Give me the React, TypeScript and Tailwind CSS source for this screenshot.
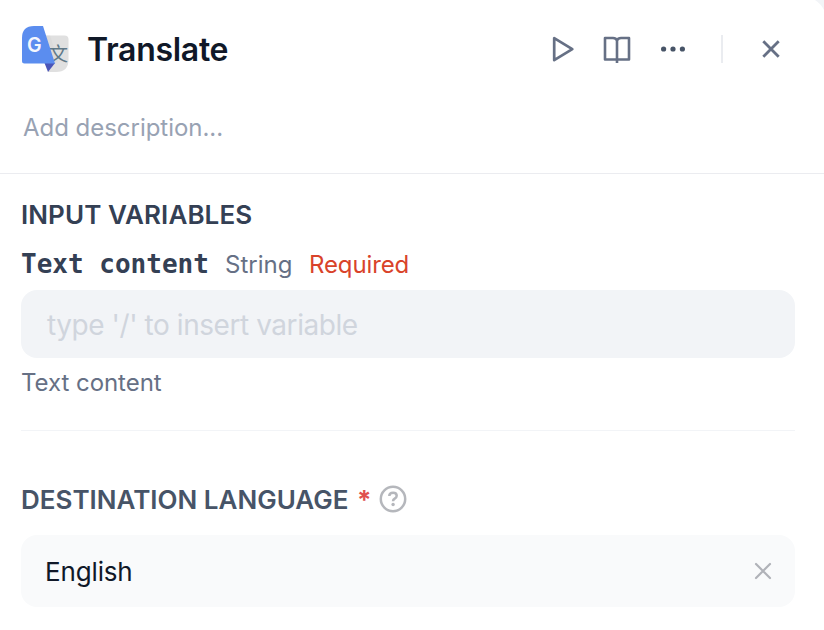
import React from 'react';

function TranslateLogo() {
  return (
    <svg width="48" height="48" viewBox="0 0 48 48" className="shrink-0">
      <path d="M24 10.500h19.500a4 4 0 0 1 4 4v20q0 12.500-12.500 12.500H27z" fill="#e0e0e0" />
      <path d="M24 10.500h5l8 25-10 11z" fill="#d0d0d0" opacity="0.35" />
      <text x="27.500" y="35.500" fontSize="19.500" fill="#607988" fontWeight="400" fontFamily="'Noto Sans CJK SC', sans-serif">文</text>
      <path d="M23.500 38h10.500L27 47z" fill="#4a55b8" />
      <path d="M13 1H22L34 38.500H3.500a2.500 2.500 0 0 1-2.500-2.500V13Q1 1 13 1z" fill="#5b8def" />
      <text x="6" y="26.800" fontSize="19.500" fill="#f4f7fd" fontWeight="600" fontFamily="Inter, sans-serif">G</text>
    </svg>
  );
}

function Header() {
  return (
    <header className="flex h-[174px] flex-col border-b border-[#ebecf0] pl-[21px]">
      <div className="mt-[25px] flex h-12 items-center">
        <TranslateLogo />
        <h1 className="ml-[18px] w-[465px] pt-[2px] text-[32px] leading-[48px] font-semibold tracking-[-0.3px] text-[#101828]">Translate</h1>
        <svg width="24" height="28" viewBox="0 0 24 28" fill="none" stroke="#667085" strokeWidth="2.700" strokeLinejoin="round">
          <path d="M2.200 3.200v22L20.300 14.200z" />
        </svg>
        <svg className="ml-[27px]" width="28" height="30" viewBox="0 0 28 30" fill="none" stroke="#667085" strokeWidth="2.600" strokeLinejoin="round">
          <path d="M14 6.500q-1-2.500-4-2.500H2v21.500h24V4h-8q-3 0-4 2.500zM14 6.500v22.500" />
        </svg>
        <svg className="ml-[30px]" width="26" height="8" viewBox="0 0 26 8" fill="#475467">
          <circle cx="2.600" cy="4" r="2.600" />
          <circle cx="12" cy="4" r="2.600" />
          <circle cx="21.400" cy="4" r="2.600" />
        </svg>
        <div className="ml-[34px] h-7 w-[2px] bg-[#eaecf0]" />
        <svg className="ml-[38px]" width="20" height="20" viewBox="0 0 20 20" fill="none" stroke="#667085" strokeWidth="2.800">
          <path d="M2.300 2.300l15.400 15.400M17.700 2.300L2.300 17.700" />
        </svg>
      </div>
      <p className="mt-[37px] pl-[2px] text-[24px] leading-9 tracking-[-0.03px] text-[#98a2b3]">Add description...</p>
    </header>
  );
}

export default function App() {
  return (
    <div className="relative h-[630px] w-[824px] overflow-hidden bg-white font-['Inter',sans-serif]">
      <svg className="absolute top-0 right-0" width="9" height="10" viewBox="0 0 9 10">
        <path d="M0 0q6 4 9 10V0z" fill="#f2f4f7" />
      </svg>
      <Header />
      <main className="flex flex-col px-[21px] pr-[29px]">
        <h2 className="mt-[23px] text-[26px] leading-9 font-semibold tracking-[0.08px] text-[#344054]">INPUT VARIABLES</h2>
        <div className="mt-[13px] flex h-9 items-baseline text-[24px] leading-9">
          <span className="w-[204px] font-['DejaVu_Sans_Mono',monospace] text-[26px] font-bold text-[#344054]">Text content</span>
          <span className="w-[84px] text-[#667085]">String</span>
          <span className="tracking-[-0.12px] text-[#d9432a]">Required</span>
        </div>
        <div className="mt-[8px] flex h-[68px] items-center rounded-[16px] bg-[#f2f4f7] pt-[2px] pl-[26px] text-[28px] tracking-[-0.44px] text-[#d0d5dd]">type '/' to insert variable</div>
        <p className="mt-[7px] text-[24px] leading-9 tracking-[-0.05px] text-[#667085]">Text content</p>
        <div className="mt-[29px] h-px bg-[#f2f4f7]" />
        <div className="mt-[51px] flex h-9 items-center">
          <h2 className="w-[336px] text-[26px] leading-9 font-semibold whitespace-nowrap text-[#475467]">DESTINATION LANGUAGE</h2>
          <span className="w-[22px] text-[26px] leading-9 font-bold text-[#e0504e]">*</span>
          <svg className="-mt-[2px]" width="28" height="28" viewBox="0 0 28 28" fill="none" stroke="#b5b7bc" strokeWidth="2.500">
            <circle cx="14" cy="14" r="12.200" />
            <path d="M10.300 11q0-3.300 3.800-3.300 3.600 0 3.600 3 0 1.700-2 2.900-1.700 1-1.700 2.700" />
            <circle cx="14.100" cy="19.500" r="1.700" fill="#b5b7bc" stroke="none" />
          </svg>
        </div>
        <div className="mt-[17px] flex h-[72px] items-center justify-between rounded-[16px] bg-[#f9fafb] pr-[23px] pl-6 text-[26px] text-[#101828]">
          <span className="tracking-[-0.15px]">English</span>
          <svg width="18" height="18" viewBox="0 0 18 18" fill="none" stroke="#b0b2b8" strokeWidth="2.200" strokeLinecap="round">
            <path d="M2 2l14 14M16 2L2 16" />
          </svg>
        </div>
      </main>
    </div>
  );
}
